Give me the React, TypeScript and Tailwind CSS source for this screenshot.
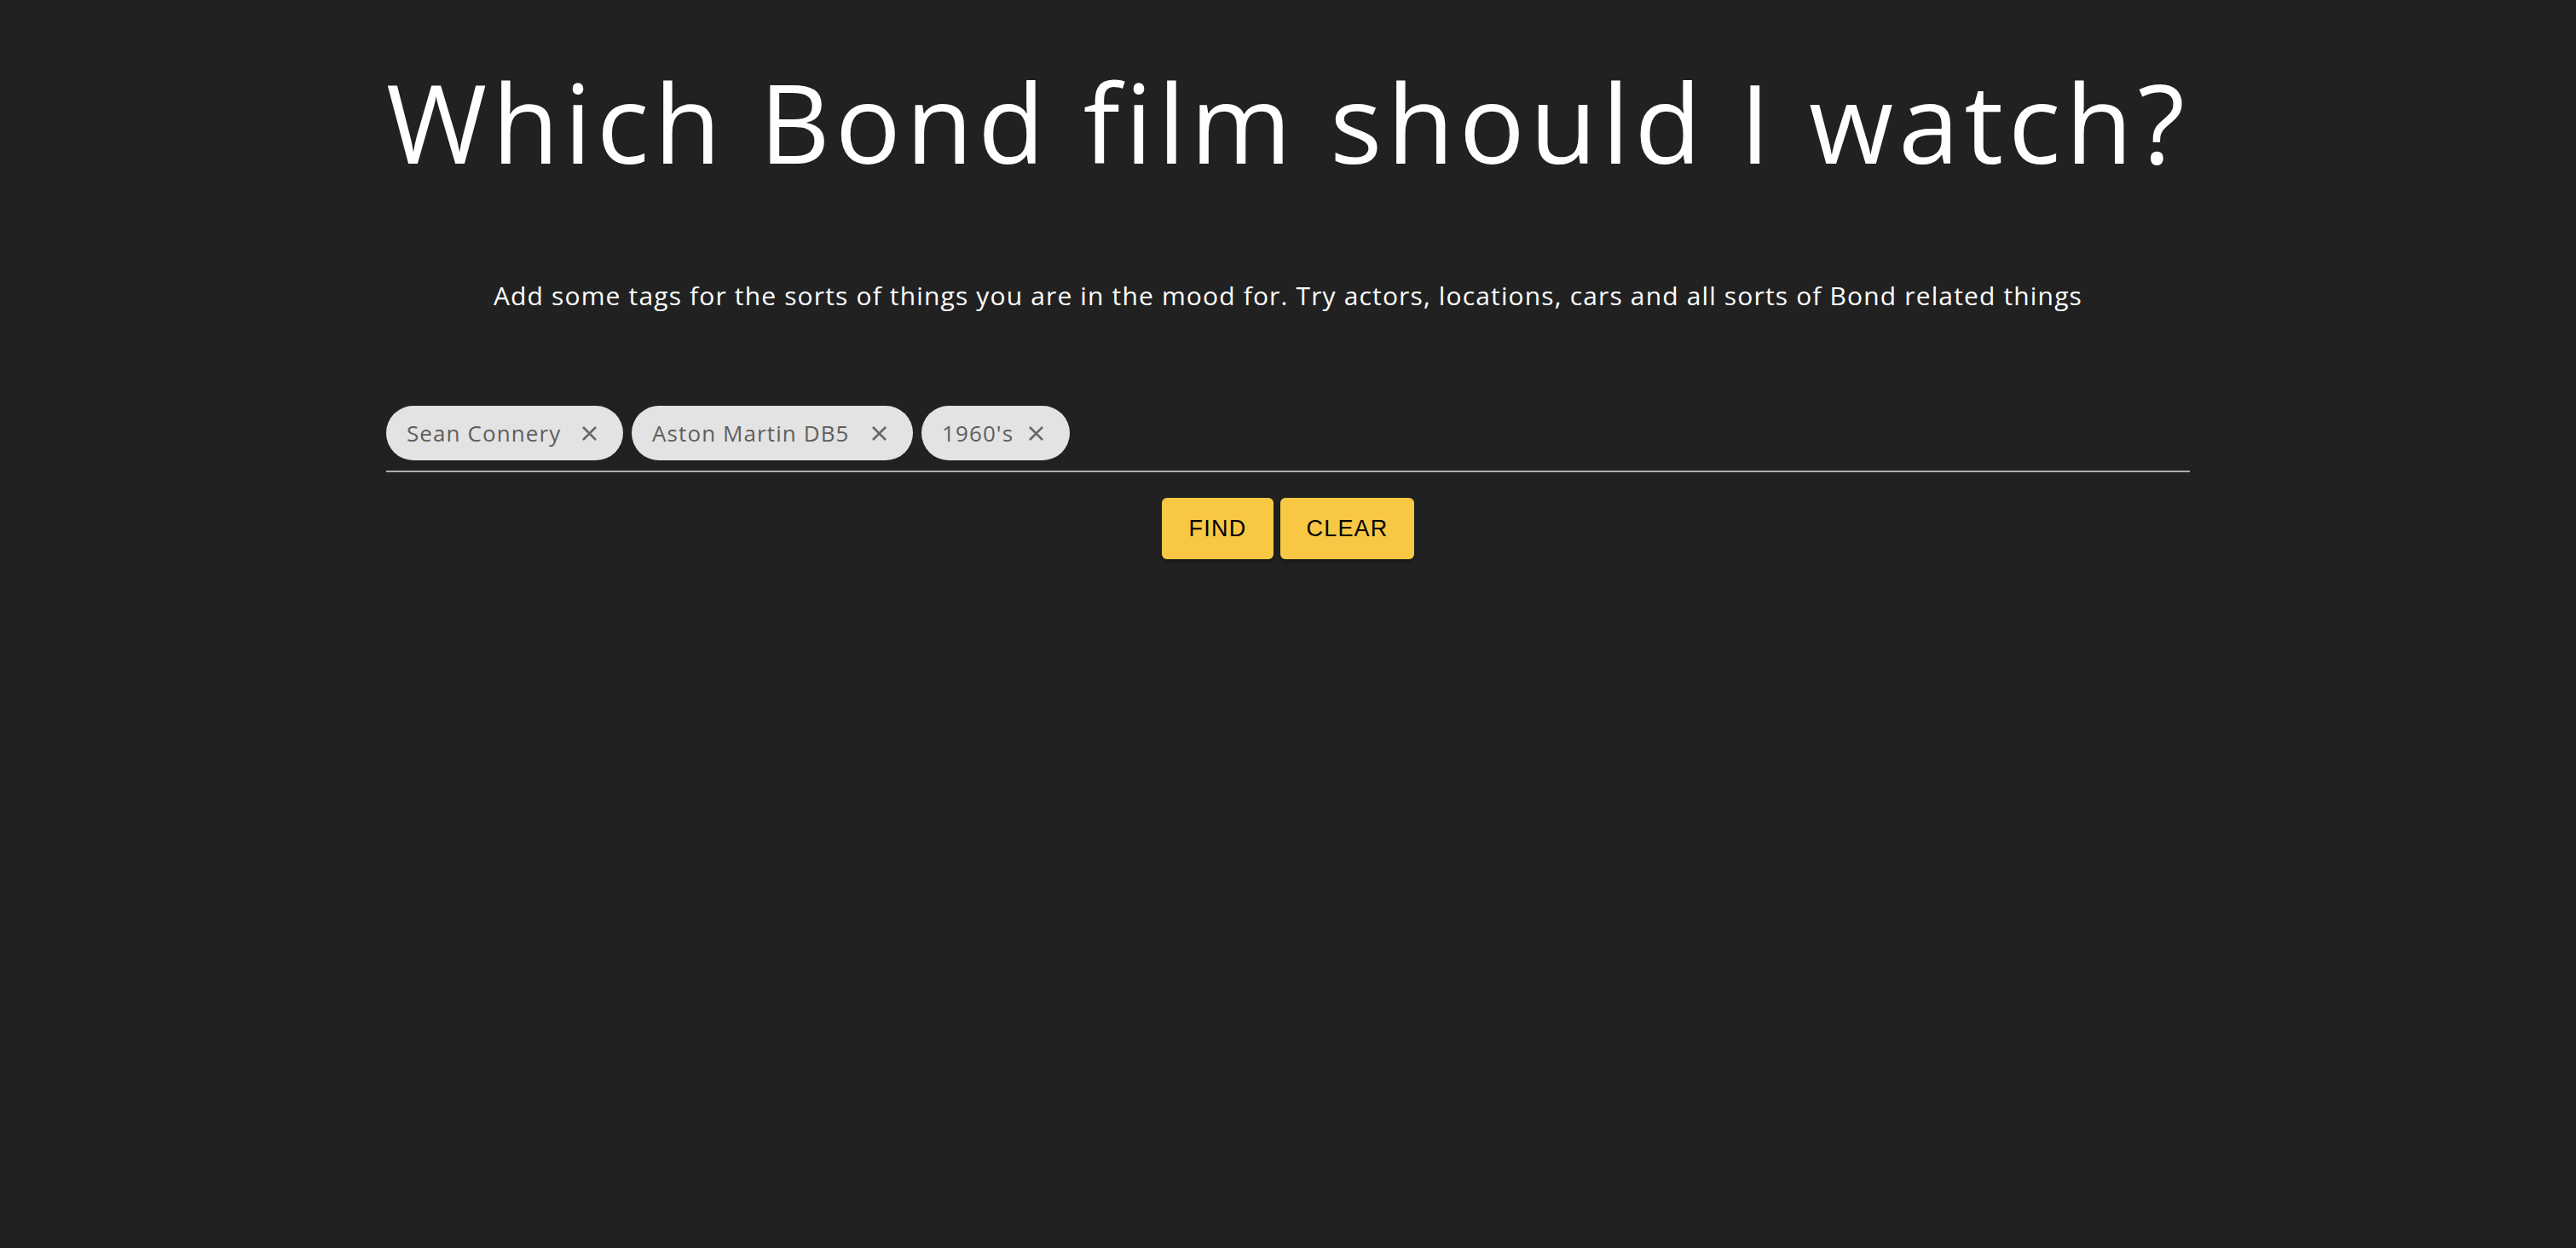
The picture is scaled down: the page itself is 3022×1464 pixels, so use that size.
import React from "react";

const XIcon = () => (
  <svg width="19" height="19" viewBox="0 0 19 19" className="shrink-0">
    <path d="M2 2 L17 17 M17 2 L2 17" stroke="#666666" strokeWidth="2.6" strokeLinecap="butt" fill="none" />
  </svg>
);

const Chip = ({ label, w }: { label: string; w: string }) => (
  <div className={`flex h-[64px] items-center justify-between rounded-full bg-[#e3e3e3] pl-[24px] pr-[30px] ${w}`}>
    <span className="text-[26px] leading-none text-[#5e5e5e] [font-family:'Open_Sans',sans-serif] font-medium tracking-[1.1px]">{label}</span>
    <XIcon />
  </div>
);

export default function App() {
  return (
    <div className="min-h-screen w-full bg-[#212121] flex flex-col items-center [font-family:'Open_Sans',sans-serif]">
      <div className="w-[2116px] flex flex-col items-center">
        <h1 className="mt-[79px] text-[128px] leading-none text-white font-normal tracking-[6px] whitespace-nowrap">
          Which Bond film should I watch?
        </h1>
        <p className="mt-[125px] text-[30px] leading-none text-white font-medium tracking-[1.15px] whitespace-nowrap">
          Add some tags for the sorts of things you are in the mood for. Try actors, locations, cars and all sorts of Bond related things
        </p>
        <div className="mt-[114px] w-full">
          <div className="flex gap-[10px]">
            <Chip label="Sean Connery" w="w-[278px]" />
            <Chip label="Aston Martin DB5" w="w-[330px]" />
            <Chip label="1960's" w="w-[174px]" />
          </div>
          <div className="mt-[12px] h-[2px] w-full bg-[#adadad]" />
        </div>
        <div className="mt-[30px] flex gap-[8px]">
          <button className="h-[72px] w-[131px] rounded-[6px] bg-[#f8c744] text-[27px] font-medium tracking-[1.2px] text-black shadow-[0_3px_4px_rgba(0,0,0,0.35)] [font-family:'Liberation_Sans',Arial,sans-serif]">
            FIND
          </button>
          <button className="h-[72px] w-[157px] rounded-[6px] bg-[#f8c744] text-[27px] font-medium tracking-[1.2px] text-black shadow-[0_3px_4px_rgba(0,0,0,0.35)] [font-family:'Liberation_Sans',Arial,sans-serif]">
            CLEAR
          </button>
        </div>
      </div>
    </div>
  );
}
